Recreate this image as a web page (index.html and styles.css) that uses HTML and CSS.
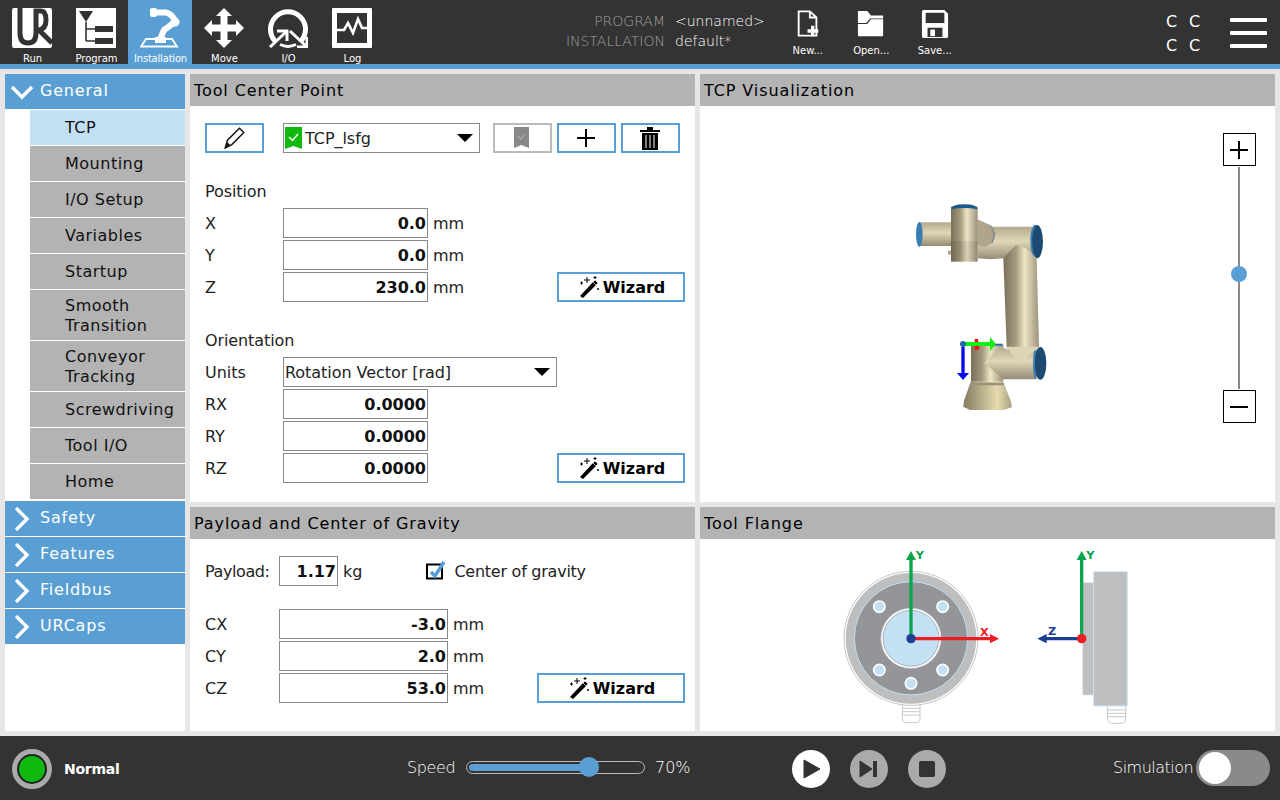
FILE: index.html
```html
<!DOCTYPE html>
<html lang="en">
<head>
<meta charset="utf-8">
<title>Installation - TCP</title>
<link rel="stylesheet" href="styles.css">
</head>
<body>
<header class="topbar">
  <nav class="tabs">
    <div class="tab">
      <svg class="tab-icon" viewBox="0 0 40 40"><rect width="40" height="40" rx="2" fill="#fff"/><path d="M8 0V25Q8 35 16 35Q24 35 24 25V3H29Q34 3 34 12Q34 21 27 22L40 35" fill="none" stroke="#333" stroke-width="5"/></svg>
      <span>Run</span>
    </div>
    <div class="tab">
      <svg class="tab-icon" viewBox="0 0 40 40"><rect width="40" height="40" fill="#fff"/><path d="M3 3H17L10 14Z" fill="#333"/><path d="M10 14V33M10 21H19M10 33H19" fill="none" stroke="#333" stroke-width="1.6"/><rect x="19" y="18" width="18" height="6" fill="#333"/><rect x="19" y="30" width="18" height="6" fill="#333"/></svg>
      <span>Program</span>
    </div>
    <div class="tab tab-on">
      <svg class="tab-icon" viewBox="0 0 40 40"><path d="M6 31H32L37 38.500H1Z" fill="none" stroke="#fff" stroke-width="1.800"/><rect x="15" y="29" width="11" height="6" fill="#fff"/><path d="M12 4.500H26Q31 5 36 14" fill="none" stroke="#fff" stroke-width="6"/><circle cx="35" cy="14" r="4.500" fill="#fff"/><path d="M35 14L24 22L20.500 30" fill="none" stroke="#fff" stroke-width="6"/><rect x="10" y="0" width="7" height="9" rx="2" fill="#fff"/></svg>
      <span class="tab-tight">Installation</span>
    </div>
    <div class="tab">
      <svg class="tab-icon" viewBox="0 0 40 40"><path d="M20 0L28 8H23.500V16.500H32V12L40 20L32 28V23.500H23.500V32H28L20 40L12 32H16.500V23.500H8V28L0 20L8 12V16.500H16.500V8H12Z" fill="#fff"/></svg>
      <span>Move</span>
    </div>
    <div class="tab">
      <svg class="tab-icon" viewBox="0 0 40 40"><path d="M7 33A17.500 17.500 0 1 1 33 33" fill="none" stroke="#fff" stroke-width="5"/><path d="M12 36.500A18 18 0 0 0 28 36.500" fill="none" stroke="#fff" stroke-width="3"/><path d="M2 39L19 23" fill="none" stroke="#fff" stroke-width="3"/><path d="M9 23H19V33" fill="none" stroke="#fff" stroke-width="3"/><path d="M22 23L39 39" fill="none" stroke="#fff" stroke-width="3"/><path d="M39 29V39H29" fill="none" stroke="#fff" stroke-width="3"/></svg>
      <span>I/O</span>
    </div>
    <div class="tab">
      <svg class="tab-icon" viewBox="0 0 40 40"><rect width="40" height="40" rx="1" fill="#fff"/><rect x="5" y="5" width="30" height="30" fill="#333"/><path d="M5 22H12L16 15L21 25L26 11L30 20H35" fill="none" stroke="#fff" stroke-width="2.600"/></svg>
      <span>Log</span>
    </div>
  </nav>
  <div class="file-info">
    <div class="file-labels"><div>PROGRAM</div><div>INSTALLATION</div></div>
    <div class="file-values"><div>&lt;unnamed&gt;</div><div>default*</div></div>
  </div>
  <div class="file-actions">
    <div class="file-btn">
      <svg class="file-icon" viewBox="0 0 30 30"><path d="M5 1.500H17L24 8V27.500H5Z" fill="none" stroke="#fff" stroke-width="2"/><path d="M17 1.500V8H24" fill="none" stroke="#fff" stroke-width="2"/><path d="M20 17V28M14.500 22.500H26" stroke="#fff" stroke-width="3.500"/></svg>
      <span>New...</span>
    </div>
    <div class="file-btn">
      <svg class="file-icon" viewBox="0 0 30 30"><path d="M1 1H11L15 6H28V9H14L10 14H1Z" fill="#fff"/><path d="M1 15H11L15 10H28V27Q28 28 27 28H2Q1 28 1 27Z" fill="#fff"/></svg>
      <span>Open...</span>
    </div>
    <div class="file-btn">
      <svg class="file-icon" viewBox="0 0 30 30"><path d="M1 2Q1 0 3 0H25L29 4V28Q29 30 27 30H3Q1 30 1 28Z" fill="#fff"/><rect x="5" y="3" width="20" height="11" fill="#333"/><rect x="7" y="19" width="16" height="10" fill="#333"/><rect x="10" y="21" width="5" height="7" fill="#fff"/></svg>
      <span>Save...</span>
    </div>
  </div>
  <div class="cc-grid"><span>C</span><span>C</span><span>C</span><span>C</span></div>
  <div class="hamburger"><i></i><i></i><i></i></div>
</header>
<div class="accent"></div>

<main class="workspace">
  <aside class="sidebar">
    <div class="group"><svg class="chev" viewBox="0 0 24 24"><path d="M2 7L12 17L22 7" fill="none" stroke="#fff" stroke-width="3.400"/></svg><span class="group-text">General</span></div>
    <ul class="items">
      <li class="item item-on">TCP</li>
      <li class="item">Mounting</li>
      <li class="item">I/O Setup</li>
      <li class="item">Variables</li>
      <li class="item">Startup</li>
      <li class="item item-tall">Smooth Transition</li>
      <li class="item item-tall">Conveyor Tracking</li>
      <li class="item">Screwdriving</li>
      <li class="item">Tool I/O</li>
      <li class="item">Home</li>
    </ul>
    <div class="group"><svg class="chev" viewBox="0 0 24 24"><path d="M6 1L17 12L6 23" fill="none" stroke="#fff" stroke-width="3.400"/></svg><span class="group-text">Safety</span></div>
    <div class="group"><svg class="chev" viewBox="0 0 24 24"><path d="M6 1L17 12L6 23" fill="none" stroke="#fff" stroke-width="3.400"/></svg><span class="group-text">Features</span></div>
    <div class="group"><svg class="chev" viewBox="0 0 24 24"><path d="M6 1L17 12L6 23" fill="none" stroke="#fff" stroke-width="3.400"/></svg><span class="group-text">Fieldbus</span></div>
    <div class="group"><svg class="chev" viewBox="0 0 24 24"><path d="M6 1L17 12L6 23" fill="none" stroke="#fff" stroke-width="3.400"/></svg><span class="group-text">URCaps</span></div>
  </aside>

  <section class="panel">
    <h2 class="panel-title">Tool Center Point</h2>
    <div class="panel-body tcp-body">
      <div class="toolbar">
        <button class="btn btn-icon"><svg width="24" height="24" viewBox="0 0 22 22"><path d="M3 20L5 13L16 2L20 6L9 17Z" fill="#fff" stroke="#111" stroke-width="1.300"/><path d="M3 20L5 15L7.500 17.500Z" fill="#111"/></svg></button>
        <div class="select select-tcp">
          <svg class="flag" width="17" height="22" viewBox="0 0 17 22"><path d="M0 0H17V22L8.500 19L0 22Z" fill="#0dba0d"/><path d="M4 10L7.500 13.500L13 7" fill="none" stroke="#fff" stroke-width="1.500"/></svg>
          <span class="select-text">TCP_lsfg</span>
          <i class="caret"></i>
        </div>
        <button class="btn btn-icon btn-off"><svg width="17" height="22" viewBox="0 0 17 22"><path d="M1 0H16V21L8.500 18L1 21Z" fill="#888"/><path d="M5 9L8 12L12 7" fill="none" stroke="#aaa" stroke-width="1.200"/></svg></button>
        <button class="btn btn-icon btn-add"><svg width="20" height="20" viewBox="0 0 20 20"><path d="M10 1V19M1 10H19" stroke="#000" stroke-width="2"/></svg></button>
        <button class="btn btn-icon btn-add"><svg width="22" height="24" viewBox="0 0 22 24"><path d="M1 4H21V6H1ZM8 1H14V4H8Z" fill="#000"/><path d="M3 7H19V24H3Z" fill="#000"/><path d="M7 9V22M11 9V22M15 9V22" stroke="#fff" stroke-width="1"/></svg></button>
      </div>
      <div class="section-label label-position">Position</div>
      <div class="row"><label class="lbl">X</label><div class="num">0.0</div><span class="unit">mm</span></div>
      <div class="row"><label class="lbl">Y</label><div class="num">0.0</div><span class="unit">mm</span></div>
      <div class="row"><label class="lbl">Z</label><div class="num">230.0</div><span class="unit">mm</span>
        <button class="btn btn-wizard row-end"><svg class="wand" viewBox="0 0 22 22"><path d="M2 20L15 6L18 9L5 22Z" fill="#000"/><path d="M15 6L17 4L20 7L18 9Z" fill="#000" stroke="#fff" stroke-width=".6"/><path d="M9 1V7M6 4H12M17 0V3M15.500 1.500H18.500M2 7H5M3.500 5.500V8.500M20 12V14M19 13H21" stroke="#000" stroke-width="1"/></svg>Wizard</button>
      </div>
      <div class="section-label label-orientation">Orientation</div>
      <div class="row"><label class="lbl">Units</label>
        <div class="select select-units"><span class="select-text">Rotation Vector [rad]</span><i class="caret"></i></div>
      </div>
      <div class="row"><label class="lbl">RX</label><div class="num">0.0000</div></div>
      <div class="row"><label class="lbl">RY</label><div class="num">0.0000</div></div>
      <div class="row"><label class="lbl">RZ</label><div class="num">0.0000</div>
        <button class="btn btn-wizard row-end"><svg class="wand" viewBox="0 0 22 22"><path d="M2 20L15 6L18 9L5 22Z" fill="#000"/><path d="M15 6L17 4L20 7L18 9Z" fill="#000" stroke="#fff" stroke-width=".6"/><path d="M9 1V7M6 4H12M17 0V3M15.500 1.500H18.500M2 7H5M3.500 5.500V8.500M20 12V14M19 13H21" stroke="#000" stroke-width="1"/></svg>Wizard</button>
      </div>
    </div>
  </section>

  <section class="panel">
    <h2 class="panel-title">TCP Visualization</h2>
    <div class="panel-body viz-body">
      <div class="viz-stage">
        <svg class="robot" viewBox="0 0 540 690">
          <defs>
            <linearGradient id="tanH" x1="0" x2="1" y1="0" y2="0">
              <stop offset="0" stop-color="#7a6f59"/><stop offset=".35" stop-color="#a69a7f"/><stop offset=".6" stop-color="#eee5c6"/><stop offset="1" stop-color="#9c917a"/>
            </linearGradient>
            <linearGradient id="tanV" x1="0" x2="0" y1="0" y2="1">
              <stop offset="0" stop-color="#b3a88c"/><stop offset=".45" stop-color="#e0d7b8"/><stop offset="1" stop-color="#958b73"/>
            </linearGradient>
            <linearGradient id="tanF" x1="0" x2="1" y1="0" y2="0">
              <stop offset="0" stop-color="#857a63"/><stop offset=".7" stop-color="#e6dcae"/><stop offset="1" stop-color="#a89d82"/>
            </linearGradient>
          </defs>
          <path d="M242 575H340L362 632L366 652L340 660H240L220 650L222 632Z" fill="url(#tanF)"/>
          <path d="M243 578H340L342 586H240Z" fill="#9c917a"/>
          <rect x="243" y="465" width="97" height="110" fill="url(#tanH)"/>
          <path d="M283 518L330 468L400 500L440 478V568L340 568Z" fill="url(#tanV)"/>
          <ellipse cx="451" cy="520" rx="18" ry="49" fill="#1c4a70"/>
          <path d="M436 478Q428 520 436 566" fill="none" stroke="#3a7db5" stroke-width="6"/>
          <path d="M263 110H430V205H340L300 208L263 205Z" fill="url(#tanV)"/>
          <path d="M262 88L300 105L316 130L310 155L285 172L262 165Z" fill="#b0a58a"/>
          <path d="M300 105Q322 130 305 160" fill="none" stroke="#22608f" stroke-width="2"/>
          <ellipse cx="441" cy="155" rx="18" ry="50" fill="#1c4a70"/>
          <path d="M435 105Q422 125 424 155Q424 185 435 205" fill="none" stroke="#3a7db5" stroke-width="6"/>
          <path d="M340 205L378 165L408 175L440 205L447 470L385 525L350 470Z" fill="url(#tanH)"/>
          <path d="M350 470H447L385 525Z" fill="#ddd4b5"/>
          <rect x="88" y="97" width="100" height="71" fill="url(#tanV)"/>
          <ellipse cx="88" cy="133" rx="10" ry="37" fill="#3a7db5"/>
          <rect x="174" y="182" width="12" height="12" fill="#b0a58a"/>
          <rect x="183" y="50" width="80" height="165" fill="url(#tanH)"/>
          <rect x="183" y="153" width="80" height="62" fill="#000" opacity=".08"/>
          <path d="M183 58Q184 43 223 43Q262 43 263 58Q223 50 183 58Z" fill="#1c5a8c"/>
          <path d="M258 461H338V467H258Z" fill="#2a6ea5"/>
          <path d="M254 447L264 447L268 478L254 481Z" fill="#f01010"/>
          <path d="M225 456H300V441L318 462L300 483V468H225Z" fill="#10f010"/>
          <rect x="214" y="470" width="10" height="80" fill="#0808e8"/>
          <path d="M201 549H237L219 570Z" fill="#0808e8"/>
          <circle cx="219" cy="462" r="9" fill="#1f6aa0"/>
        </svg>
      </div>
      <div class="zoom">
        <div class="zoom-btn"><svg width="18" height="18" viewBox="0 0 18 18"><path d="M9 0V18M0 9H18" stroke="#000" stroke-width="2"/></svg></div>
        <div class="zoom-track"><i class="zoom-thumb"></i></div>
        <div class="zoom-btn"><svg width="18" height="18" viewBox="0 0 18 18"><path d="M0 9H18" stroke="#000" stroke-width="2"/></svg></div>
      </div>
    </div>
  </section>

  <section class="panel">
    <h2 class="panel-title">Payload and Center of Gravity</h2>
    <div class="panel-body payload-body">
      <div class="row row-payload">
        <label class="lbl lbl-payload">Payload:</label><div class="num num-small">1.17</div><span class="unit">kg</span>
        <span class="check"><svg class="check-icon" width="20" height="20" viewBox="0 0 20 20"><rect x="1" y="3.500" width="15" height="14" fill="#fff" stroke="#000" stroke-width="2"/><path d="M5 11L9 15L18 1" fill="none" stroke="#5a9fd4" stroke-width="3.500"/></svg></span>
        <span class="check-label">Center of gravity</span>
      </div>
      <div class="row"><label class="lbl lbl-c">CX</label><div class="num num-c">-3.0</div><span class="unit">mm</span></div>
      <div class="row"><label class="lbl lbl-c">CY</label><div class="num num-c">2.0</div><span class="unit">mm</span></div>
      <div class="row"><label class="lbl lbl-c">CZ</label><div class="num num-c">53.0</div><span class="unit">mm</span>
        <button class="btn btn-wizard btn-wizard-wide row-end"><svg class="wand" viewBox="0 0 22 22"><path d="M2 20L15 6L18 9L5 22Z" fill="#000"/><path d="M15 6L17 4L20 7L18 9Z" fill="#000" stroke="#fff" stroke-width=".6"/><path d="M9 1V7M6 4H12M17 0V3M15.500 1.500H18.500M2 7H5M3.500 5.500V8.500M20 12V14M19 13H21" stroke="#000" stroke-width="1"/></svg>Wizard</button>
      </div>
    </div>
  </section>

  <section class="panel">
    <h2 class="panel-title">Tool Flange</h2>
    <div class="panel-body flange-body">
      <svg class="flange" viewBox="0 0 1020 570">
        <path d="M247 490V535Q247 548 260 548H287Q300 548 300 535V490" fill="#fff" stroke="#c5c6c8" stroke-width="3"/>
        <path d="M248 505H299M248 515H299M248 525H299" stroke="#c5c6c8" stroke-width="3"/>
        <circle cx="273" cy="295" r="201" fill="#fff" stroke="#c5c6c8" stroke-width="3"/>
        <circle cx="273" cy="295" r="196" fill="#bcbec0"/>
        <circle cx="273" cy="295" r="170" fill="#939598" stroke="#c3e0f5" stroke-width="3"/>
        <circle cx="273" cy="295" r="91" fill="#fff" stroke="#a7a9ac" stroke-width="2"/>
        <circle cx="273" cy="295" r="84" fill="#c3e0f5" stroke="#939598" stroke-width="2"/>
        <g fill="#c3e0f5" stroke="#fff" stroke-width="5">
          <circle cx="178" cy="200" r="17"/><circle cx="368" cy="200" r="17"/><circle cx="178" cy="390" r="17"/><circle cx="368" cy="390" r="17"/><circle cx="273" cy="430" r="17"/>
        </g>
        <path d="M268 295V60H258L273 33L288 60H278V295Z" fill="#0da44e"/>
        <path d="M273 291H510V282L537 296L510 310V301H273Z" fill="#ed1c24"/>
        <circle cx="273" cy="296" r="14" fill="#1c3f94"/>
        <text class="ax ax-g" x="287" y="57">Y</text>
        <text class="ax ax-r" x="480" y="288">X</text>
        <path d="M863 490V535Q863 550 876 550H904Q917 550 917 535V490" fill="#fff" stroke="#c5c6c8" stroke-width="3"/>
        <path d="M864 510H916M864 520H916M864 530H916" stroke="#c5c6c8" stroke-width="3"/>
        <rect x="788" y="128" width="34" height="337" rx="3" fill="#bcbec0" stroke="#dde3e8" stroke-width="2"/>
        <rect x="821" y="95" width="101" height="403" rx="2" fill="#bcbec0" stroke="#d5e4ef" stroke-width="3"/>
        <path d="M780 295V60H770L785 33L800 60H790V295Z" fill="#0da44e"/>
        <path d="M785 291H680V282L652 296L680 310V301H785Z" fill="#1c3f94"/>
        <circle cx="785" cy="296" r="14" fill="#ed1c24"/>
        <text class="ax ax-g" x="799" y="57">Y</text>
        <text class="ax ax-b" x="684" y="286">Z</text>
      </svg>
    </div>
  </section>
</main>

<footer class="bottombar">
  <div class="status">
    <span class="lamp"><i></i></span>
    <span class="status-text">Normal</span>
  </div>
  <div class="speed">
    <span class="speed-label">Speed</span>
    <div class="speed-track"><i class="speed-fill"></i><i class="speed-thumb"></i></div>
    <span class="speed-val">70%</span>
  </div>
  <div class="transport">
    <span class="round round-on"><svg width="18" height="20" viewBox="0 0 18 20"><path d="M1 1L17 10L1 19Z" fill="#333" stroke="#333" stroke-linejoin="round"/></svg></span>
    <span class="round"><svg width="20" height="20" viewBox="0 0 20 20"><path d="M1 2L13 10L1 18Z" fill="#333" stroke="#333"/><rect x="14" y="2" width="4" height="16" fill="#333"/></svg></span>
    <span class="round"><svg width="16" height="16" viewBox="0 0 16 16"><rect width="16" height="16" rx="2" fill="#333"/></svg></span>
  </div>
  <div class="sim">
    <span class="sim-label">Simulation</span>
    <span class="toggle"><i></i></span>
  </div>
</footer>
</body>
</html>
```
FILE: styles.css
```css
* { box-sizing: border-box; }
html, body { margin: 0; padding: 0; }
body {
  width: 1280px;
  height: 800px;
  overflow: hidden;
  background: #e6e6e6;
  font-family: "DejaVu Sans", sans-serif;
  font-size: 16px;
  color: #222;
  display: flex;
  flex-direction: column;
}

/* top bar */
.topbar { height: 64px; background: #333; color: #fff; display: flex; flex: none; }
.tabs { display: flex; }
.tab {
  width: 64px; height: 64px;
  display: flex; flex-direction: column; align-items: center;
  padding-top: 8px;
  font-size: 10px;
  line-height: 12px;
}
.tab span { padding-left: 1px; }
.tab-on { background: #5a9fd4; }
.tab-tight { letter-spacing: -.2px; }
.tab-icon { width: 40px; height: 40px; margin-bottom: 5px; flex: none; }
.file-info { display: flex; gap: 10px; margin-left: 185px; padding-top: 11px; font-size: 14px; line-height: 20px; }
.file-labels { width: 96px; color: #a0a0a0; font-weight: 200; white-space: nowrap; display: flex; flex-direction: column; align-items: flex-end; }
.file-values { width: 90px; color: #fff; font-weight: 200; }
.file-actions { display: flex; margin-left: 11px; }
.file-btn {
  width: 63.5px;
  display: flex; flex-direction: column; align-items: center;
  padding-top: 10px;
  font-size: 10px; line-height: 12px;
}
.file-icon { width: 28px; height: 28px; margin-bottom: 7px; flex: none; }
.cc-grid {
  margin-left: 199.5px; padding-top: 11px;
  display: grid; grid-template-columns: 23px 23px; grid-auto-rows: 24px;
  font-size: 16px; line-height: 22px; color: #fff;
}
.hamburger { margin-left: 18px; padding-top: 18px; width: 37px; display: flex; flex-direction: column; gap: 9px; }
.hamburger i { display: block; height: 4px; background: #fff; border-radius: 1px; }
.accent { height: 5px; background: #5a9fd4; flex: none; }

/* workspace */
.workspace {
  flex: none;
  height: 667px;
  padding: 5px;
  display: grid;
  grid-template-columns: 180px 505px 575px;
  grid-template-rows: 428px 224px;
  column-gap: 5px;
  row-gap: 5px;
}
.sidebar { grid-row: 1 / 3; background: #fff; }
.group {
  height: 35px; margin-bottom: 1px;
  background: #5a9fd4; color: #fff;
  display: flex; align-items: center;
  font-size: 16px;
  padding-left: 5px;
}
.group-text { letter-spacing: .8px; padding-bottom: 2px; }
.chev { width: 24px; height: 24px; margin-right: 6px; flex: none; }
.items { list-style: none; margin: 0 0 2px; padding: 0 0 0 25px; }
.item {
  height: 35px; margin-bottom: 1px;
  background: #b3b3b3; color: #111;
  display: flex; align-items: center;
  padding: 0 30px 0 35px;
  line-height: 20px;
  letter-spacing: .5px;
}
.item-tall { height: 50px; padding-top: 1px; }
.item-on { background: #c3e0f5; }

/* panels */
.panel { background: #fff; display: flex; flex-direction: column; min-width: 0; }
.panel-title {
  margin: 0; height: 32px; flex: none;
  background: #b3b3b3; color: #000;
  font-size: 16px; font-weight: 400;
  line-height: 33px;
  letter-spacing: .9px;
  padding-left: 4px;
}
.panel-body { flex: 1; min-height: 0; }
.tcp-body { padding: 17px 10px 0 15px; }
.payload-body { padding: 17px 10px 0 15px; }

.toolbar { display: flex; height: 30px; }
.btn {
  height: 30px; padding: 0; margin: 0;
  background: #fff;
  border: 2px solid #5a9fd4;
  display: inline-flex; align-items: center; justify-content: center;
  font-family: inherit; color: #000;
}
.btn-icon { width: 59px; padding-right: 2px; }
.btn-off { border-color: #bbb; margin-left: 13px; }
.btn-add { margin-left: 5px; }
.select {
  height: 30px; border: 1px solid #888; background: #fff;
  display: flex; align-items: center;
  padding-left: 1px;
}
.select-tcp { width: 197px; margin-left: 19px; }
.select-units { width: 274px; }
.flag { margin-right: 3px; flex: none; }
.select-text { flex: 1; white-space: nowrap; letter-spacing: -.05px; }
.caret {
  width: 0; height: 0; margin-right: 6px;
  border-left: 8px solid transparent; border-right: 8px solid transparent; border-top: 8px solid #000;
}
.section-label { height: 20px; line-height: 20px; letter-spacing: -.1px; }
.label-position { margin: 29px 0 6px; }
.label-orientation { margin: 29px 0 6px; }
.row { display: flex; align-items: center; height: 30px; margin-bottom: 2px; }
.lbl { width: 78px; flex: none; }
.num {
  width: 145px; height: 30px; flex: none;
  border: 1px solid #888; background: #fff;
  text-align: right; font-weight: 700; font-size: 16px;
  line-height: 30px; padding-right: 1px; color: #111;
}
.unit { margin-left: 5px; }
.row-end { margin-left: auto; }
.btn-wizard { width: 128px; font-size: 16px; font-weight: 700; gap: 3px; padding-left: 1px; }
.btn-wizard-wide { width: 148px; }
.wand { width: 22px; height: 22px; flex: none; }

.lbl-payload { width: 74px; letter-spacing: -.4px; }
.num-small { width: 59px; }
.row-payload { margin-bottom: 23px; }
.check { margin-left: 64px; width: 20px; height: 20px; flex: none; }
.check-icon { display: block; overflow: visible; }
.check-label { margin-left: 8px; letter-spacing: -.25px; }
.lbl-c { width: 74px; }
.num-c { width: 169px; }

/* visualization */
.viz-body { display: flex; }
.viz-stage { flex: 1; padding: 84px 0 0 190px; }
.robot { width: 180px; height: 230px; display: block; }
.zoom { width: 52px; margin-right: 10px; padding-top: 27px; display: flex; flex-direction: column; align-items: center; }
.zoom-btn {
  width: 33px; height: 33px; flex: none;
  border: 1px solid #000; background: #fff;
  display: flex; align-items: center; justify-content: center;
}
.zoom-track { width: 2px; height: 222px; margin: 1px 0; background: #888; position: relative; }
.zoom-thumb {
  position: absolute; left: -7px; top: 99px;
  width: 16px; height: 16px; border-radius: 50%; background: #5a9fd4;
}

/* tool flange */
.flange-body { display: flex; padding: 1px 0 0 120px; }
.flange { width: 340px; height: 190px; display: block; }
.ax { font-family: "DejaVu Sans", sans-serif; font-weight: 700; font-size: 34px; }
.ax-g { fill: #0da44e; }
.ax-r { fill: #ed1c24; }
.ax-b { fill: #1c3f94; }

/* bottom bar */
.bottombar { height: 64px; flex: none; background: #333; color: #fff; display: flex; align-items: center; }
.status { display: flex; align-items: center; width: 407px; padding-left: 12px; padding-top: 2px; }
.lamp {
  width: 40px; height: 40px; border-radius: 50%;
  background: #222; border: 5px solid #aaa;
  display: flex; align-items: center; justify-content: center;
}
.lamp i { width: 26px; height: 26px; border-radius: 50%; background: #0dba0d; display: block; }
.status-text { margin-left: 12px; font-size: 14px; font-weight: 700; letter-spacing: -.25px; }
.speed { display: flex; align-items: center; width: 385px; padding-bottom: 2px; color: #fff; font-weight: 200; }
.speed-label { width: 59px; letter-spacing: -.35px; }
.speed-track {
  width: 179px; height: 13px; border: 1px solid #bbb; border-radius: 7px;
  position: relative;
}
.speed-fill { position: absolute; left: 2px; top: 2px; height: 7px; width: 120px; border-radius: 4px; background: #5a9fd4; }
.speed-thumb { position: absolute; left: 112px; top: -5px; width: 20px; height: 20px; border-radius: 50%; background: #5a9fd4; }
.speed-val { margin-left: 10px; }
.transport { display: flex; gap: 20px; width: 321px; padding-top: 2px; }
.round { width: 38px; height: 38px; border-radius: 50%; background: #aaa; display: flex; align-items: center; justify-content: center; }
.round-on { background: #fff; padding-left: 2px; }
.sim { display: flex; align-items: center; padding-bottom: 1px; }
.sim-label { width: 83px; color: #fff; font-weight: 200; letter-spacing: -.5px; }
.toggle { width: 74px; height: 36px; border-radius: 18px; background: #8a8a8a; position: relative; display: block; }
.toggle i { position: absolute; left: 3px; top: 2px; width: 32px; height: 32px; border-radius: 50%; background: #fff; }
```
